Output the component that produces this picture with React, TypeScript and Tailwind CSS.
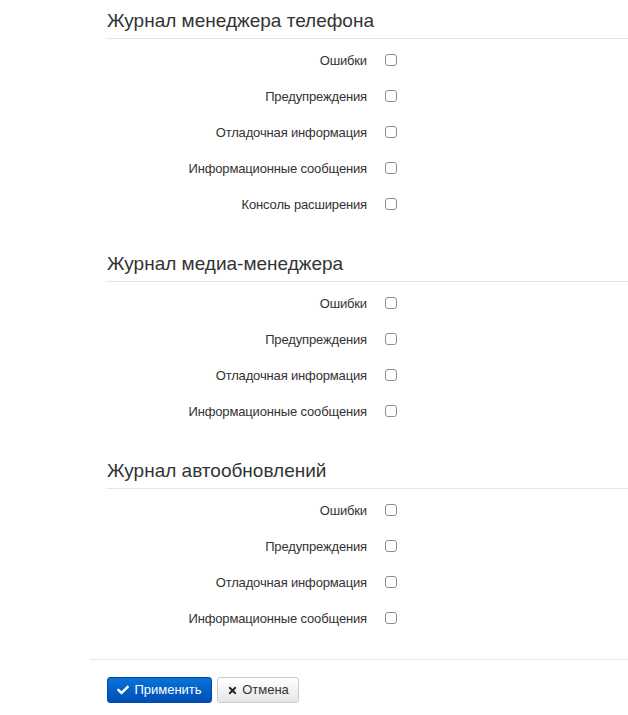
import React from "react";
import { FaCheck, FaTimes } from "react-icons/fa";

const sections: { title: string; items: string[] }[] = [
  {
    title: "Журнал менеджера телефона",
    items: [
      "Ошибки",
      "Предупреждения",
      "Отладочная информация",
      "Информационные сообщения",
      "Консоль расширения",
    ],
  },
  {
    title: "Журнал медиа-менеджера",
    items: ["Ошибки", "Предупреждения", "Отладочная информация", "Информационные сообщения"],
  },
  {
    title: "Журнал автообновлений",
    items: ["Ошибки", "Предупреждения", "Отладочная информация", "Информационные сообщения"],
  },
];

export default function App() {
  return (
    <div
      className="w-[628px] h-[715px] bg-white text-[#333] overflow-hidden"
      style={{ fontFamily: '"Liberation Sans", Arial, sans-serif' }}
    >
      <div className="ml-[90px] pt-[5px]">
        <div className="pl-[17px] flex flex-col gap-[26px]">
          {sections.map((s) => (
            <div key={s.title} className="flex flex-col">
              <div className="text-[19px] leading-[30px] pt-[1px] pb-[2px] border-b border-[#e5e5e5] mb-[3px]">
                {s.title}
              </div>
              {s.items.map((it) => (
                <div key={it} className="h-[36px] flex items-center">
                  <div className="w-[260px] text-right text-[13px] leading-[20px] pt-[1px] tracking-[-0.15px]">
                    {it}
                  </div>
                  <input
                    type="checkbox"
                    className="ml-[18px] w-[12px] h-[12px] m-0 appearance-none rounded-[3px] border border-[#8d8d99] bg-white"
                  />
                </div>
              ))}
            </div>
          ))}
        </div>
        <div className="mt-[23px] border-t border-[#e5e5e5] pt-[17px] pl-[17px] flex gap-[5px]">
          <button className="h-[26px] w-[105px] rounded-[3px] border border-[#0049a8] bg-linear-to-b from-[#0b72da] to-[#004fb5] text-white text-[13px] flex items-center justify-center gap-[5px]">
            <FaCheck className="w-[12px] h-[12px]" />
            <span>Применить</span>
          </button>
          <button className="h-[26px] w-[82px] rounded-[3px] border border-[#cccccc] bg-linear-to-b from-[#ffffff] to-[#e6e6e6] text-[#333] text-[13px] flex items-center justify-center gap-[4px]">
            <FaTimes className="w-[11px] h-[11px] text-[#222]" />
            <span>Отмена</span>
          </button>
        </div>
      </div>
    </div>
  );
}
